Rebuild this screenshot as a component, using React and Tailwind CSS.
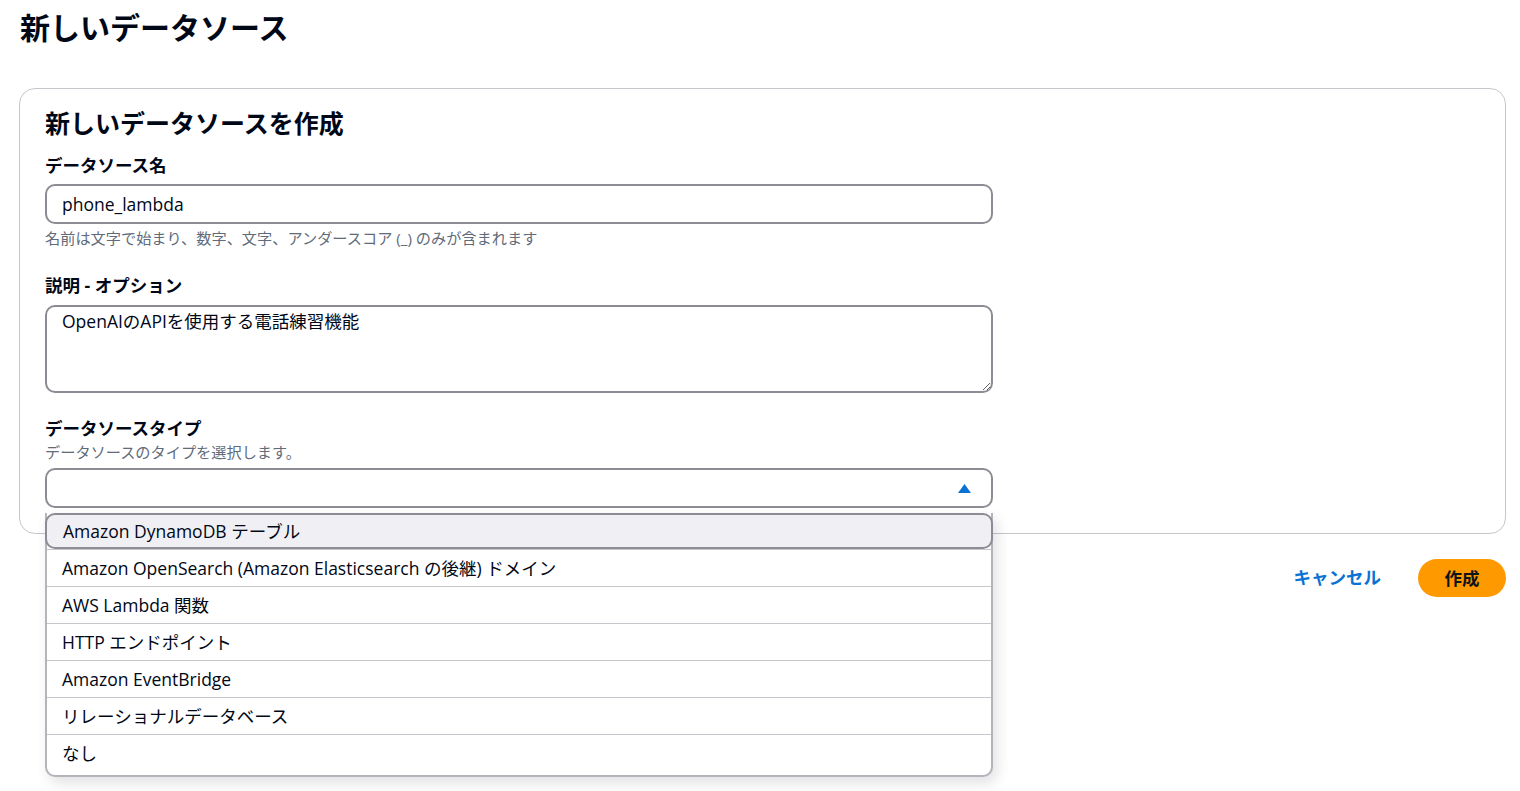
const font = { fontFamily: '"Open Sans", "Noto Sans CJK JP", sans-serif' };

const OPTIONS = [
  "Amazon DynamoDB テーブル",
  "Amazon OpenSearch (Amazon Elasticsearch の後継) ドメイン",
  "AWS Lambda 関数",
  "HTTP エンドポイント",
  "Amazon EventBridge",
  "リレーショナルデータベース",
  "なし",
];

export default function App() {
  return (
    <div
      className="min-h-screen bg-white text-[#000716] pl-[19px] pr-[14px] pt-[6px]"
      style={font}
    >
      {/* header */}
      <h1 className="text-[30px] leading-[44px] font-bold pl-[1px]">新しいデータソース</h1>

      {/* card */}
      <div className="mt-[38px] border border-[#c6c6cd] rounded-[16px] px-[25px] pt-[16px] pb-[25px]">
        <h2 className="text-[25px] leading-[36px] font-bold">新しいデータソースを作成</h2>

        <div className="w-[948px]">
          <label className="block mt-[13px] text-[17.5px] leading-[22px] font-bold">データソース名</label>
          <input
            readOnly
            value="phone_lambda"
            className="mt-[8px] block w-full h-[40px] border-2 border-[#8c8c94] rounded-[10px] px-[15px] text-[17.5px] text-[#000716] outline-none"
            style={font}
          />
          <p className="mt-[4px] text-[15.2px] leading-[20px] text-[#5f6b7a]">
            名前は文字で始まり、数字、文字、アンダースコア (_) のみが含まれます
          </p>

          <label className="block mt-[26px] text-[17.5px] leading-[22px] font-bold">説明 - オプション</label>
          <textarea
            readOnly
            value="OpenAIのAPIを使用する電話練習機能"
            className="mt-[9px] block w-full h-[88px] border-2 border-[#8c8c94] rounded-[10px] px-[15px] pt-[2px] text-[17.5px] leading-[24px] text-[#000716] outline-none"
            style={font}
          />

          <label className="block mt-[24px] text-[17.5px] leading-[22px] font-bold">データソースタイプ</label>
          <p className="mt-[3px] text-[15.2px] leading-[20px] text-[#5f6b7a]">データソースのタイプを選択します。</p>

          <div className="relative mt-[6px]">
            <div className="h-[40px] border-2 border-[#8c8c94] rounded-[10px] flex items-center justify-end pr-[20px]">
              <svg width="13" height="9" viewBox="0 0 13 9">
                <path d="M6.5 0 L13 9 L0 9 Z" fill="#0972d3" />
              </svg>
            </div>

            {/* dropdown */}
            <ul className="absolute z-10 left-0 right-0 top-[45px] pb-[4px] bg-white border-x-2 border-b-2 border-[#b4b4bb] rounded-b-[10px] shadow-[4px_6px_14px_rgba(0,7,22,0.12)]">
              {OPTIONS.map((opt, i) => (
                <li
                  key={opt}
                  className={
                    i === 0
                      ? "h-[36px] -mx-[2px] flex items-center px-[16px] text-[17.5px] bg-[#f0f0f4] border-2 border-[#8c8c94] rounded-[10px]"
                      : "h-[37px] flex items-center px-[15px] text-[17.5px] border-t border-[#c6c6cd]"
                  }
                >
                  {opt}
                </li>
              ))}
            </ul>
          </div>
        </div>
      </div>

      {/* actions */}
      <div className="flex justify-end items-center mt-[25px] gap-[37px]">
        <button className="text-[17.5px] font-bold text-[#0972d3] -mt-[2px]" style={font}>
          キャンセル
        </button>
        <button
          className="w-[88px] h-[38px] rounded-full bg-[#ff9900] text-[17.5px] font-bold text-[#0f141a]"
          style={font}
        >
          作成
        </button>
      </div>
    </div>
  );
}
